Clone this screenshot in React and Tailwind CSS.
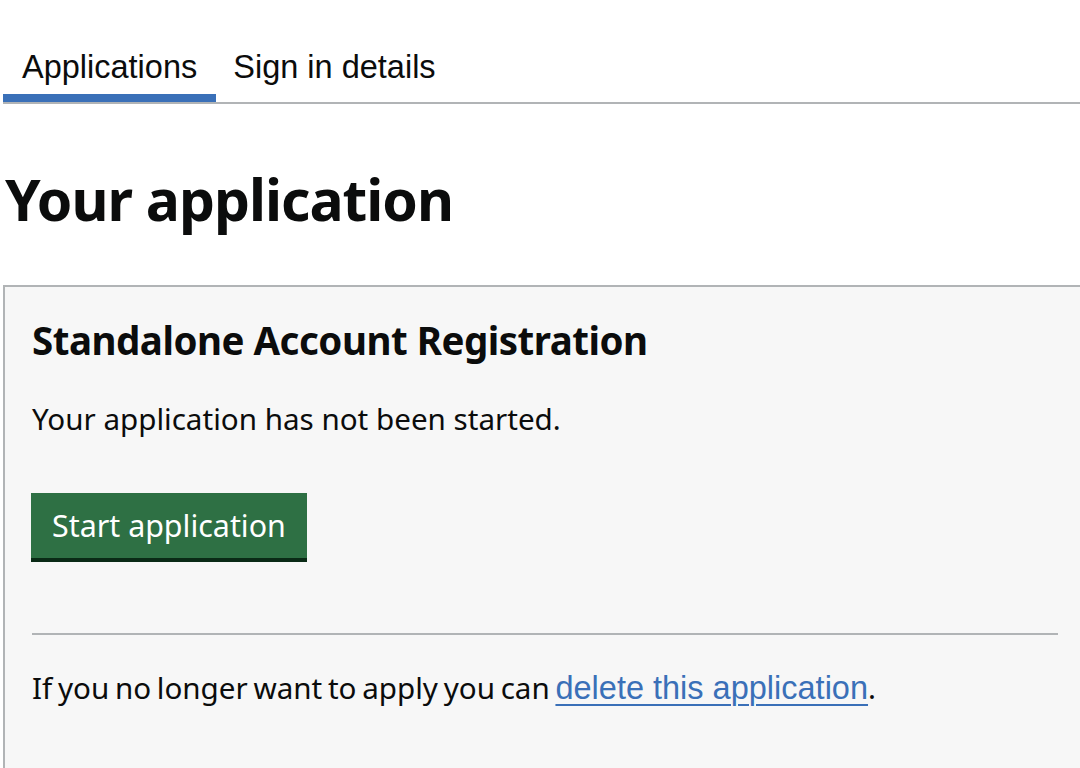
export default function App() {
  return (
    <div className="h-[768px] w-[1080px] overflow-hidden bg-white pl-[3px] pt-[49px] text-[#0b0c0c] font-['Noto_Sans',sans-serif]">
      {/* Tabs */}
      <div className="flex border-b-2 border-[#b1b4b6] font-['Liberation_Sans',Arial,sans-serif] text-[32.5px] leading-[37px]">
        <a className="border-b-8 border-[#3a70b8] px-[19px] pb-[8px] text-[#0b0c0c]">Applications</a>
        <a className="border-b-8 border-transparent px-[17px] pb-[8px] text-[#0b0c0c]">Sign in details</a>
      </div>

      <h1 className="mt-[60px] pl-[2px] text-[57px] leading-[70px] font-bold tracking-[-1px]">Your application</h1>

      {/* Application card */}
      <div className="mt-[51px] w-[1084px] border-2 border-[#b1b4b6] bg-[#f7f7f7] px-[27px] pt-[29px] pb-[120px]">
        <h2 className="text-[38.5px] leading-[48px] font-bold tracking-[-0.5px]">Standalone Account Registration</h2>
        <p className="mt-[35px] text-[29.6px] leading-[40px]">Your application has not been started.</p>
        <button className="mt-[54px] -ml-px block bg-[#2e7044] px-[21px] pt-[12px] pb-[11px] text-[30.4px] leading-[42px] text-white shadow-[0_4px_0_#0a2a16]">
          Start application
        </button>
        <hr className="mt-[75px] border-t-2 border-[#b1b4b6]" />
        <p className="mt-[33px] text-[29.6px] leading-[40px] [word-spacing:-2px]">
          If you no longer want to apply you can{' '}
          <a href="#" className="font-['Liberation_Sans',Arial,sans-serif] text-[32.5px] [word-spacing:0px] text-[#3a70b8] underline decoration-2 underline-offset-[5px]">delete this application</a>.
        </p>
      </div>
    </div>
  )
}
